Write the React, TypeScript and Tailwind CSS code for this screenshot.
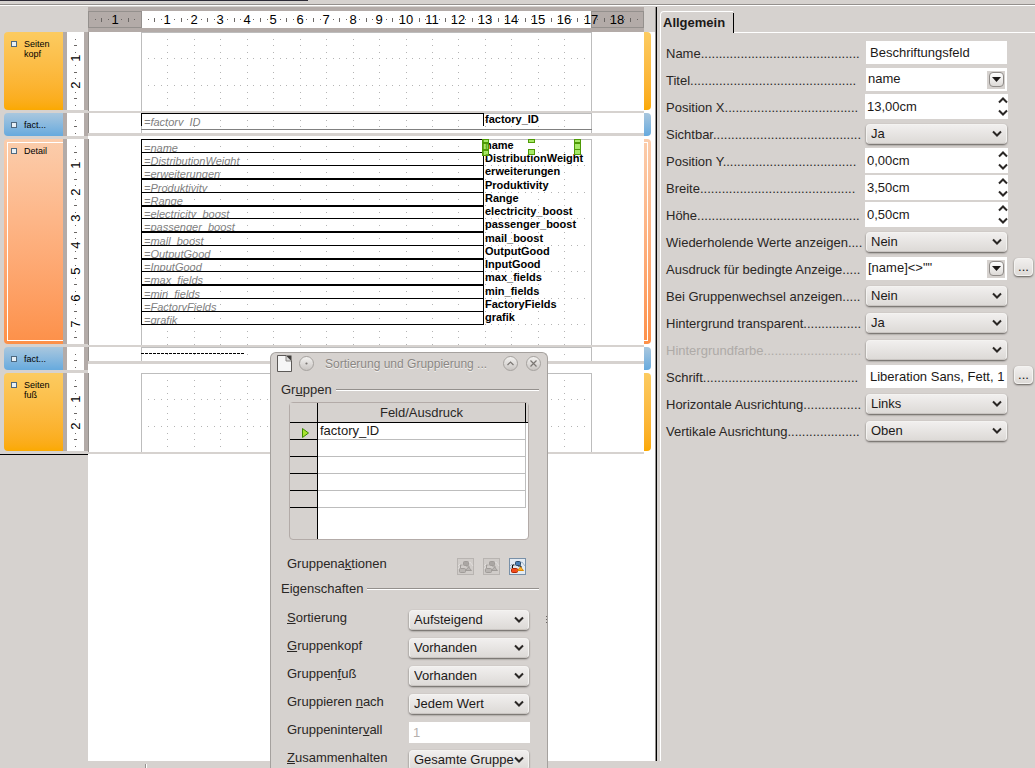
import type { ReactNode } from 'react';
import clsx from 'clsx';

const CM = 26.45;
const PAGE_CM = 17;
const MARGIN = 53;

const reportFields = [
  'name',
  'DistributionWeight',
  'erweiterungen',
  'Produktivity',
  'Range',
  'electricity_boost',
  'passenger_boost',
  'mail_boost',
  'OutputGood',
  'InputGood',
  'max_fields',
  'min_fields',
  'FactoryFields',
  'grafik',
];

type PropertyKind = 'text' | 'combo' | 'spin' | 'select';

interface Property {
  id: string;
  label: string;
  /** number of leader dots between the label and its control */
  dots: number;
  kind: PropertyKind;
  value: string;
  more?: boolean;
  disabled?: boolean;
}

const properties: Property[] = [
  { id: 'name', label: 'Name', dots: 44, kind: 'text', value: 'Beschriftungsfeld' },
  { id: 'title', label: 'Titel', dots: 46, kind: 'combo', value: 'name' },
  { id: 'pos-x', label: 'Position X', dots: 37, kind: 'spin', value: '13,00cm' },
  { id: 'visible', label: 'Sichtbar', dots: 41, kind: 'select', value: 'Ja' },
  { id: 'pos-y', label: 'Position Y', dots: 37, kind: 'spin', value: '0,00cm' },
  { id: 'width', label: 'Breite', dots: 43, kind: 'spin', value: '3,50cm' },
  { id: 'height', label: 'Höhe', dots: 45, kind: 'spin', value: '0,50cm' },
  { id: 'repeat', label: 'Wiederholende Werte anzeigen', dots: 4, kind: 'select', value: 'Nein' },
  { id: 'condition', label: 'Ausdruck für bedingte Anzeige', dots: 5, kind: 'combo', value: '[name]<>""', more: true },
  { id: 'group-change', label: 'Bei Gruppenwechsel anzeigen', dots: 5, kind: 'select', value: 'Nein' },
  { id: 'transparent', label: 'Hintergrund transparent', dots: 16, kind: 'select', value: 'Ja' },
  { id: 'background', label: 'Hintergrundfarbe', dots: 27, kind: 'select', value: '', disabled: true },
  { id: 'font', label: 'Schrift', dots: 43, kind: 'text', value: 'Liberation Sans, Fett, 1', more: true },
  { id: 'h-align', label: 'Horizontale Ausrichtung', dots: 16, kind: 'select', value: 'Links' },
  { id: 'v-align', label: 'Vertikale Ausrichtung', dots: 20, kind: 'select', value: 'Oben' },
];

function SelectBox({ id, value, disabled }: { id: string; value: string; disabled?: boolean }) {
  return (
    <div className="relative w-full">
      <select
        id={id}
        defaultValue={value}
        disabled={disabled}
        className="block h-5 w-full appearance-none rounded border border-[#f4f3f1] border-b-[#c9c5c2] bg-linear-to-b from-[#f1efee] to-[#dddad7] pr-3.5 pl-1 text-[13px] leading-[18px] text-[#1c1918] shadow-[0_1px_2px_#5f5b58] outline-none"
      >
        <option value={value}>{value}</option>
      </select>
      <svg
        className="pointer-events-none absolute top-1.5 right-[5px]"
        width="10"
        height="8"
        viewBox="0 0 10 8"
        fill="none"
        stroke="#2a2725"
        strokeWidth="2"
      >
        <path d="M1 1.5 L5 5.5 L9 1.5" />
      </svg>
    </div>
  );
}

function ComboBox({ id, value }: { id: string; value: string }) {
  return (
    <div className="flex h-[23px] w-full items-center bg-white pr-0.5">
      <input
        id={id}
        defaultValue={value}
        className="h-full w-full min-w-0 flex-1 bg-transparent pb-0.5 pl-0.5 text-[13px] text-[#1c1918] outline-none"
      />
      <span className="flex size-[18px] shrink-0 items-center justify-center bg-[#d6d2cf]">
        <button
          type="button"
          aria-label={`${id}-list`}
          className="flex size-[15px] items-center justify-center rounded border border-[#8f8b88] bg-linear-to-b from-white to-[#dddad7]"
        >
          <svg width="9" height="5" viewBox="0 0 9 5" fill="#1c1918">
            <path d="M0 0 H9 L4.5 5 Z" />
          </svg>
        </button>
      </span>
    </div>
  );
}

function SpinBox({ id, value }: { id: string; value: string }) {
  return (
    <div className="-mx-px flex h-[25px] w-[143px] shrink-0 bg-white">
      <input
        id={id}
        defaultValue={value}
        className="h-full w-full min-w-0 flex-1 bg-transparent pl-0.5 text-[13px] text-[#1c1918] outline-none"
      />
      <div className="flex w-2.5 shrink-0 flex-col justify-between py-[3px]">
        {['M1 5.5 L5 1.5 L9 5.5', 'M1 1.5 L5 5.5 L9 1.5'].map((d, i) => (
          <button key={d} type="button" aria-label={`${id}-${i === 0 ? 'up' : 'down'}`}>
            <svg className="block" width="10" height="7" viewBox="0 0 10 7" fill="none" stroke="#2a2725" strokeWidth="2">
              <path d={d} />
            </svg>
          </button>
        ))}
      </div>
    </div>
  );
}

function PropertyRow({ property }: { property: Property }) {
  const { id, label, dots, kind, value, more, disabled } = property;

  return (
    <div className="flex h-[27px] items-center">
      <label
        htmlFor={id}
        className={clsx(
          'w-[200px] shrink-0 pt-0.5 text-[13px] leading-4 whitespace-nowrap',
          disabled ? 'text-[#aeaaa7]' : 'text-[#2a2725]',
        )}
      >
        {label}
        {'.'.repeat(dots)}
      </label>
      <div className="flex w-[141px] shrink-0">
        {kind === 'text' && (
          <input
            id={id}
            defaultValue={value}
            className="h-[23px] w-full bg-white pl-1 text-[13px] text-[#1c1918] outline-none"
          />
        )}
        {kind === 'combo' && <ComboBox id={id} value={value} />}
        {kind === 'spin' && <SpinBox id={id} value={value} />}
        {kind === 'select' && <SelectBox id={id} value={value} disabled={disabled} />}
      </div>
      {more && (
        <button
          type="button"
          aria-label={`${id}-more`}
          className="mb-1 ml-[7px] h-[18px] w-[19px] shrink-0 rounded border border-[#f4f3f1] bg-linear-to-b from-[#f1efee] to-[#dddad7] text-[13px] leading-4 text-[#1c1918] shadow-[0_1px_2px_#5f5b58]"
        >
          ...
        </button>
      )}
    </div>
  );
}

function PropertyPanel() {
  return (
    <aside className="flex w-[378px] shrink-0 flex-col pt-[5px] pl-[3px]">
      <div className="flex h-[22px]">
        <button
          type="button"
          className="w-[73px] rounded-tl border-t border-l border-white pl-0.5 text-left text-[13px] font-bold text-[#1c1918]"
        >
          Allgemein
        </button>
        <div className="mt-0.5 w-px bg-black" />
        <div className="flex-1 border-b border-white" />
      </div>
      <div className="flex-1 border-l border-white pt-1.5 pl-[5px]">
        {properties.map((property) => (
          <PropertyRow key={property.id} property={property} />
        ))}
      </div>
    </aside>
  );
}

function GridDots({ height }: { height: number }) {
  const dots: string[] = [];
  for (let x = 1; x < PAGE_CM * 4; x++) {
    for (let y = 1; (y * CM) / 4 < height - 1; y++) {
      if (x % 4 === 0 || y % 4 === 0) {
        dots.push(`M${Math.round((x * CM) / 4)} ${Math.round((y * CM) / 4)}h1v1h-1z`);
      }
    }
  }
  return (
    <svg className="absolute -top-px -left-px" width="450" height={height} shapeRendering="crispEdges" fill="#b4b4b4">
      <path d={dots.join('')} />
    </svg>
  );
}

// Numbers sit on whole centimetres, a tick on the half and dots on the quarters.
function HorizontalRuler() {
  const quarters = Array.from({ length: 84 }, (_, i) => i - 7);
  return (
    <div className="flex pt-px">
      <div className="w-[88px] shrink-0" />
      <div className="relative flex min-w-0 flex-1 bg-[#b3aba8] py-1">
        <div className="h-[17px] w-[54px] shrink-0 border border-[#94908d]" />
        <div className="h-[17px] w-[449px] shrink-0 bg-white" />
        <div className="h-[17px] min-w-0 flex-1 border border-[#94908d]" />
        <svg className="absolute top-1 left-0 h-[17px] w-full" fontSize="13" textAnchor="middle" fill="#000">
          {quarters.map((q) => {
            const x = Math.round(MARGIN + (q * CM) / 4);
            if (q === 0 || x > 550) return null;
            if (q % 4 === 0) {
              return (
                <text key={q} x={x} y="13">
                  {Math.abs(q / 4)}
                </text>
              );
            }
            if (Math.abs(q % 4) === 2) return <rect key={q} x={x} y="7" width="1" height="4" fill="#6b6765" />;
            return <rect key={q} x={x} y="8" width="1" height="1" fill="#6b6765" />;
          })}
        </svg>
      </div>
      <div className="w-[11px] shrink-0" />
    </div>
  );
}

function VerticalRuler({ height }: { height: number }) {
  const quarters = Array.from({ length: Math.floor((height * 4) / CM) }, (_, i) => i + 1);
  return (
    <svg className="block bg-white" width="17" height={height} fontSize="13" textAnchor="middle" fill="#000">
      {quarters.map((q) => {
        const y = Math.round((q * CM) / 4);
        if (q % 4 === 0) {
          return (
            <text key={q} x="13" y={y} transform={`rotate(-90 13 ${y})`}>
              {q / 4}
            </text>
          );
        }
        if (q % 4 === 2) return <rect key={q} x="7" y={y} width="3" height="1" fill="#6b6765" />;
        return <rect key={q} x="8" y={y} width="1" height="1" fill="#6b6765" />;
      })}
    </svg>
  );
}

interface SectionProps {
  title: ReactNode;
  tone: 'yellow' | 'blue' | 'orange';
  height: number;
  pageHeight: number;
  thinRule?: boolean;
  children?: ReactNode;
}

const tones = {
  yellow: 'bg-linear-to-b from-[#fccb60] to-[#fba900]',
  blue: 'bg-linear-to-b from-[#a9c7de] to-[#66aade]',
  orange: 'bg-linear-to-b from-[#fbcdac] to-[#fd9048]',
};

function Section({ title, tone, height, pageHeight, thinRule, children }: SectionProps) {
  const active = tone === 'orange';
  return (
    <section className="flex">
      <div className="w-[88px] shrink-0 bg-[#d6d2cf] pb-[3px] pl-1">
        <div className="flex" style={{ height }}>
          <div className={clsx('w-[59px] rounded-l', tones[tone], active && 'py-[3px] pl-[3px]')}>
            <div
              className={clsx(
                'flex h-full items-start gap-[7px]',
                active ? 'border-y border-l border-white pt-[3px] pl-[3px]' : 'pt-[7px] pl-[7px]',
              )}
            >
              <button
                type="button"
                aria-label="Bereich"
                className="mt-0.5 size-1.5 shrink-0 border border-[#4f6980] bg-[#e8f0f6]"
              />
              <h2 className="text-[9px] leading-[10px] text-black">{title}</h2>
            </div>
          </div>
          <div className="w-1 bg-[#b3aba8]" />
          <VerticalRuler height={height} />
          <div className="w-1 bg-[#b3aba8]" />
        </div>
      </div>
      <div className="min-w-0 flex-1 overflow-hidden bg-white">
        <div className="flex border-l border-[#94908d]" style={{ height: pageHeight }}>
          <div className="w-[52px] shrink-0" />
          <div className="relative w-[451px] shrink-0 border-x border-t border-[#bdbdbd]">
            <GridDots height={pageHeight} />
            <div className="relative -mt-px -mr-px -ml-px">{children}</div>
          </div>
        </div>
        <div className={clsx('bg-[#d6d2cf]', thinRule ? 'h-0.5' : 'h-[3px]')} />
      </div>
      <div className="w-[11px] shrink-0">
        <div className={clsx('w-[7px] rounded-r', tones[tone], active && 'py-[3px] pr-[3px]')} style={{ height }}>
          {active && <div className="h-full border-y border-r border-white" />}
        </div>
      </div>
    </section>
  );
}

function FieldRow({ name, index }: { name: string; index: number }) {
  const last = index === reportFields.length - 1;
  return (
    <div className={clsx('flex', index % 4 === 2 || last ? 'h-[14px]' : 'h-[13px]')}>
      <div
        className={clsx(
          'w-[343px] shrink-0 overflow-hidden border-x border-black pl-0.5 text-[11px] text-[#808080] italic',
          index === 5 || index === 9 ? 'border-t-2 leading-[15px]' : 'border-t leading-[17px]',
          (index % 4 === 2 || last) && 'border-b',
        )}
      >
        ={name}
      </div>
      <div className="pl-px text-[11px] leading-[13px] font-bold text-black">{name}</div>
    </div>
  );
}

function SelectionHandle({ className }: { className: string }) {
  return <span className={clsx('absolute w-[7px] border border-[#4e9a06] bg-[#8ae234]/75', className)} />;
}

function ReportDesigner() {
  return (
    <main className="flex min-w-0 flex-1 flex-col">
      <HorizontalRuler />
      <div className="flex flex-1 flex-col bg-[linear-gradient(90deg,#d6d2cf_88px,white_88px)]">
        <Section
          title={
            <>
              Seiten
              <br />
              kopf
            </>
          }
          tone="yellow"
          height={78}
          pageHeight={79}
          thinRule
        />
        <Section title="fact..." tone="blue" height={23} pageHeight={20}>
          <div className="flex h-[13px]">
            <div className="w-[343px] shrink-0 overflow-hidden border-x border-t border-black pl-0.5 text-[11px] leading-[17px] text-[#808080] italic">
              =factory_ID
            </div>
            <div className="pl-px text-[11px] leading-[13px] font-bold text-black">factory_ID</div>
          </div>
          <div className="mt-[3px] h-px bg-[#808080]" />
        </Section>
        <Section title="Detail" tone="orange" height={205} pageHeight={206} thinRule>
          {reportFields.map((name, index) => (
            <FieldRow key={name} name={name} index={index} />
          ))}
          <SelectionHandle className="top-0 left-[341px] h-1" />
          <SelectionHandle className="top-1 left-[341px] h-[7px]" />
          <SelectionHandle className="top-[11px] left-[341px] h-1.5" />
          <SelectionHandle className="top-0 left-[387px] h-1" />
          <SelectionHandle className="top-2.5 left-[387px] h-1.5" />
          <SelectionHandle className="top-0 left-[433px] h-1" />
          <SelectionHandle className="top-1 left-[433px] h-[7px]" />
          <SelectionHandle className="top-2.5 left-[433px] h-1.5" />
        </Section>
        <Section title="fact..." tone="blue" height={23} pageHeight={14}>
          <div className="pt-1.5">
            <svg className="block" width="103" height="1" shapeRendering="crispEdges">
              <line x1="0" y1="0.5" x2="103" y2="0.5" stroke="#000" strokeDasharray="3 1" />
            </svg>
          </div>
        </Section>
        <Section
          title={
            <>
              Seiten
              <br />
              fuß
            </>
          }
          tone="yellow"
          height={78}
          pageHeight={79}
          thinRule
        />
        <div className="h-px w-[88px] bg-black" />
      </div>
    </main>
  );
}

function Heading({ children }: { children: ReactNode }) {
  return (
    <div className="flex h-4 items-center gap-1 pr-2 pl-2.5 text-[13px] leading-4 text-[#2a2725]">
      <h3>{children}</h3>
      <div className="h-0.5 flex-1 border-t border-[#94908d] bg-white" />
    </div>
  );
}

function GroupActionIcon({ active }: { active?: boolean }) {
  const line = active ? '#2c4a68' : '#a09c99';
  return (
    <svg className="block" width="17" height="17" viewBox="0 0 17 17">
      <rect
        x="0.5"
        y="0.5"
        width="16"
        height="16"
        fill={active ? '#e4ebf2' : '#d0ccc9'}
        stroke={active ? '#7890a8' : '#b8b4b1'}
      />
      <path
        d="M1 11 L5 6 M11 5 L13 4 L16 8 M1 8 L3 6"
        fill="none"
        stroke={active ? '#9fb4c8' : '#e0dddb'}
        strokeWidth="1"
      />
      <path d="M5.5 7 H3.5 V10 M9 8 H12 V10" fill="none" stroke={active ? '#111' : line} />
      <rect x="6.5" y="3.5" width="5" height="4" rx="1" fill={active ? '#4a7fb5' : '#aaa6a3'} stroke={line} />
      <rect x="2.5" y="10.5" width="6" height="4" rx="1" fill={active ? '#f24a1c' : '#b9b5b2'} stroke={active ? '#b02800' : line} />
      <path d="M8.5 12.5 L11.5 9 L14.5 12.5 Z" fill={active ? '#fcaf2a' : '#b9b5b2'} stroke={active ? '#e08a00' : line} />
    </svg>
  );
}

function TitleButton({ label, children }: { label: string; children: ReactNode }) {
  return (
    <button
      type="button"
      aria-label={label}
      className="flex size-[15px] shrink-0 items-center justify-center rounded-full border border-[#a5a19e] bg-linear-to-b from-[#f3f2f0] to-[#c9c5c2]"
    >
      <svg width="9" height="9" viewBox="0 0 9 9" fill="none" stroke="#7a7673" strokeWidth="1.2">
        {children}
      </svg>
    </button>
  );
}

const groupOptions = [
  { id: 'sort', label: <><u>S</u>ortierung</>, value: 'Aufsteigend' },
  { id: 'group-header', label: <><u>G</u>ruppenkopf</>, value: 'Vorhanden' },
  { id: 'group-footer', label: <>Gruppen<u>f</u>uß</>, value: 'Vorhanden' },
  { id: 'group-on', label: <>Gruppieren <u>n</u>ach</>, value: 'Jedem Wert' },
  { id: 'group-interval', label: <>Gruppeninter<u>v</u>all</>, value: '1' },
  { id: 'keep-together', label: <><u>Z</u>usammenhalten</>, value: 'Gesamte Gruppe' },
];

function SortingDialog() {
  return (
    <div
      role="dialog"
      className="absolute top-[352px] bottom-0 left-[270px] w-[278px] overflow-hidden rounded-t-md border-x border-t border-[#a5a19e] bg-[#d6d2cf] text-[#2a2725]"
    >
      <div className="flex h-[21px] items-center pr-1.5 pl-1.5">
        <svg width="15" height="17" viewBox="0 0 15 17">
          <path d="M0.5 0.5 H9 L14.5 6 V16.5 H0.5 Z" fill="#f6f6f6" stroke="#5c5957" />
          <path d="M9 0.5 H14.5 V6 Z" fill="#3f3d3b" />
          <path d="M9 1 V6 H14" fill="#d8d8d8" stroke="#8a8784" />
        </svg>
        <div className="ml-[7px] flex">
          <TitleButton label="Menü">
            <circle cx="4.5" cy="4.5" r="0.5" />
          </TitleButton>
        </div>
        <h2 className="min-w-0 flex-1 pl-[11px] text-[12px] leading-4 whitespace-nowrap text-[#8a8683] [text-shadow:0_1px_0_#f4f3f1]">
          Sortierung und Gruppierung ...
        </h2>
        <div className="flex gap-2">
          <TitleButton label="Einrollen">
            <path d="M1.5 6 L4.5 3 L7.5 6" />
          </TitleButton>
          <TitleButton label="Schließen">
            <path d="M1.5 1.5 L7.5 7.5 M7.5 1.5 L1.5 7.5" />
          </TitleButton>
        </div>
      </div>

      <div className="pt-2">
        <Heading>
          Gr<u>u</u>ppen
        </Heading>
      </div>

      <div className="mt-1 mr-[18px] ml-[18px] flex h-[138px] flex-col rounded-sm border border-[#b3aba8] bg-[linear-gradient(90deg,#d6d2cf_27px,black_27px,black_28px,white_28px)] text-[13px]">
        <table className="w-full table-fixed border-separate border-spacing-0">
          <colgroup>
            <col className="w-[28px]" />
            <col />
            <col className="w-0.5" />
          </colgroup>
          <thead>
            <tr className="h-5 bg-[#d6d2cf]">
              <th className="border-r border-b border-black p-0" />
              <th className="border-r border-b border-black p-0 text-center leading-[17px] font-normal">Feld/Ausdruck</th>
              <th className="border-b border-black p-0" />
            </tr>
          </thead>
          <tbody>
            {['factory_ID', '', '', '', ''].map((field, i) => (
              <tr key={i} className="h-[17px]">
                <td className="border-r border-b border-black bg-[#d6d2cf] p-0">
                  {field && (
                    <svg className="mt-1 ml-3 block" width="7" height="10" viewBox="0 0 7 10">
                      <path d="M0.5 0.5 L6.5 5 L0.5 9.5 Z" fill="#a6e22e" stroke="#3c8a00" />
                    </svg>
                  )}
                </td>
                <td className="border-r border-b border-[#bdbdbd] p-0 pl-0.5 leading-4 text-[#1c1918]">{field}</td>
                <td className="p-0" />
              </tr>
            ))}
          </tbody>
        </table>
      </div>

      <div className="mt-3.5 flex h-6 items-center gap-[9px] pr-[21px] pl-4">
        <span className="flex-1 pb-1 text-[13px] leading-4">
          Gruppena<u>k</u>tionen
        </span>
        <button type="button" aria-label="Nach oben" disabled>
          <GroupActionIcon />
        </button>
        <button type="button" aria-label="Nach unten" disabled>
          <GroupActionIcon />
        </button>
        <button type="button" aria-label="Löschen">
          <GroupActionIcon active />
        </button>
      </div>

      <div className="pt-[3px]">
        <Heading>Eigenschaften</Heading>
      </div>

      <div className="flex flex-col gap-2 pt-[13px] pr-[18px] pl-4 text-[13px]">
        {groupOptions.map(({ id, label, value }) => (
          <div key={id} className="flex h-5 items-center">
            <label htmlFor={id} className="w-[122px] shrink-0 pb-1 leading-4 whitespace-nowrap">
              {label}
            </label>
            {id === 'group-interval' ? (
              <input
                id={id}
                defaultValue={value}
                disabled
                className="h-[21px] w-[121px] bg-white pl-1 text-[13px] text-[#b4b0ad]"
              />
            ) : (
              <SelectBox id={id} value={value} />
            )}
          </div>
        ))}
      </div>
      <div className="absolute top-[263px] right-0 h-2 w-px bg-[repeating-linear-gradient(#6b6765_0_1px,transparent_1px_3px)]" />
    </div>
  );
}

export default function App() {
  return (
    <div className="relative flex h-screen flex-col overflow-hidden bg-[#d6d2cf] font-['Liberation_Sans',Arial,sans-serif]">
      <div className="h-[5px] shrink-0 border-b border-[#94908d]">
        <div className="h-px w-[308px] bg-[#2d2a35]" />
      </div>
      <div className="flex min-h-0 flex-1 border-t border-white">
        <ReportDesigner />
        <div className="mt-px w-0.5 shrink-0 border-l border-[#94908d] bg-black" />
        <PropertyPanel />
      </div>
      <div className="h-[7px] shrink-0 pt-[3px] pl-[145px]">
        <div className="h-1 w-0.5 border-l border-[#94908d] bg-white" />
      </div>
      <SortingDialog />
    </div>
  );
}
